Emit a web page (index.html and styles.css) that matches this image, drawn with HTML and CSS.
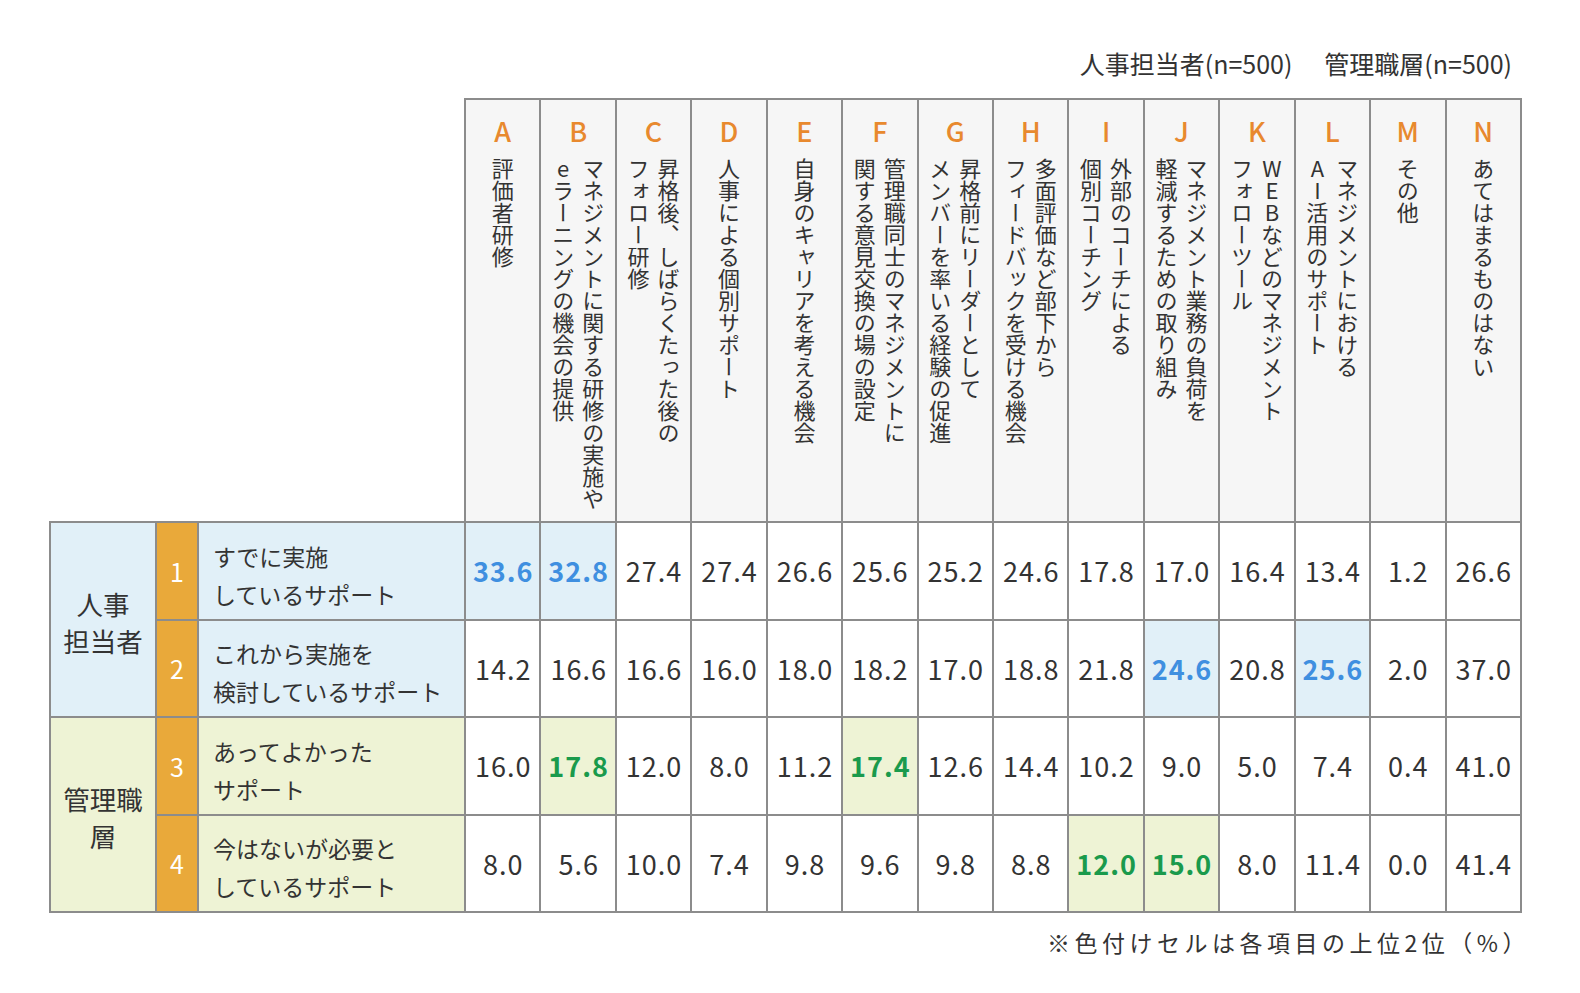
FILE: index.html
```html
<!DOCTYPE html>
<html lang="ja">
<head>
<meta charset="utf-8">
<title>サポート施策の実施状況</title>
<link rel="stylesheet" href="styles.css">
</head>
<body>
<div class="page">
  <div class="legend">
    <span>人事担当者(n=500)</span>
    <span>管理職層(n=500)</span>
  </div>
  <table class="grid">
    <colgroup>
      <col class="c-group"><col class="c-num"><col class="c-label">
      <col class="c-data"><col class="c-data"><col class="c-data"><col class="c-data"><col class="c-data"><col class="c-data"><col class="c-data">
      <col class="c-data"><col class="c-data"><col class="c-data"><col class="c-data"><col class="c-data"><col class="c-data"><col class="c-data">
    </colgroup>
    <thead>
      <tr class="head-row">
        <th class="corner" colspan="3"></th>
        <th class="hd"><div class="hd-in"><span class="letter">A</span><span class="vt">評価者研修</span></div></th>
        <th class="hd"><div class="hd-in"><span class="letter">B</span><span class="vt">マネジメントに関する研修の実施や<br>eラーニングの機会の提供</span></div></th>
        <th class="hd"><div class="hd-in"><span class="letter">C</span><span class="vt">昇格後、しばらくたった後の<br>フォロー研修</span></div></th>
        <th class="hd"><div class="hd-in"><span class="letter">D</span><span class="vt">人事による個別サポート</span></div></th>
        <th class="hd"><div class="hd-in"><span class="letter">E</span><span class="vt">自身のキャリアを考える機会</span></div></th>
        <th class="hd"><div class="hd-in"><span class="letter">F</span><span class="vt">管理職同士のマネジメントに<br>関する意見交換の場の設定</span></div></th>
        <th class="hd"><div class="hd-in"><span class="letter">G</span><span class="vt">昇格前にリーダーとして<br>メンバーを率いる経験の促進</span></div></th>
        <th class="hd"><div class="hd-in"><span class="letter">H</span><span class="vt">多面評価など部下から<br>フィードバックを受ける機会</span></div></th>
        <th class="hd"><div class="hd-in"><span class="letter">I</span><span class="vt">外部のコーチによる<br>個別コーチング</span></div></th>
        <th class="hd"><div class="hd-in"><span class="letter">J</span><span class="vt">マネジメント業務の負荷を<br>軽減するための取り組み</span></div></th>
        <th class="hd"><div class="hd-in"><span class="letter">K</span><span class="vt">WEBなどのマネジメント<br>フォローツール</span></div></th>
        <th class="hd"><div class="hd-in"><span class="letter">L</span><span class="vt">マネジメントにおける<br>AI活用のサポート</span></div></th>
        <th class="hd"><div class="hd-in"><span class="letter">M</span><span class="vt">その他</span></div></th>
        <th class="hd"><div class="hd-in"><span class="letter">N</span><span class="vt">あてはまるものはない</span></div></th>
      </tr>
    </thead>
    <tbody>
      <tr class="row">
        <th class="group blue" rowspan="2">人事<br>担当者</th>
        <td class="num">1</td>
        <td class="label blue">すでに実施<br>しているサポート</td>
        <td class="val top-blue">33.6</td><td class="val top-blue">32.8</td><td class="val">27.4</td><td class="val">27.4</td><td class="val">26.6</td><td class="val">25.6</td><td class="val">25.2</td>
        <td class="val">24.6</td><td class="val">17.8</td><td class="val">17.0</td><td class="val">16.4</td><td class="val">13.4</td><td class="val">1.2</td><td class="val">26.6</td>
      </tr>
      <tr class="row">
        <td class="num">2</td>
        <td class="label blue">これから実施を<br>検討しているサポート</td>
        <td class="val">14.2</td><td class="val">16.6</td><td class="val">16.6</td><td class="val">16.0</td><td class="val">18.0</td><td class="val">18.2</td><td class="val">17.0</td>
        <td class="val">18.8</td><td class="val">21.8</td><td class="val top-blue">24.6</td><td class="val">20.8</td><td class="val top-blue">25.6</td><td class="val">2.0</td><td class="val">37.0</td>
      </tr>
      <tr class="row">
        <th class="group green" rowspan="2">管理職<br>層</th>
        <td class="num">3</td>
        <td class="label green">あってよかった<br>サポート</td>
        <td class="val">16.0</td><td class="val top-green">17.8</td><td class="val">12.0</td><td class="val">8.0</td><td class="val">11.2</td><td class="val top-green">17.4</td><td class="val">12.6</td>
        <td class="val">14.4</td><td class="val">10.2</td><td class="val">9.0</td><td class="val">5.0</td><td class="val">7.4</td><td class="val">0.4</td><td class="val">41.0</td>
      </tr>
      <tr class="row">
        <td class="num">4</td>
        <td class="label green">今はないが必要と<br>しているサポート</td>
        <td class="val">8.0</td><td class="val">5.6</td><td class="val">10.0</td><td class="val">7.4</td><td class="val">9.8</td><td class="val">9.6</td><td class="val">9.8</td>
        <td class="val">8.8</td><td class="val top-green">12.0</td><td class="val top-green">15.0</td><td class="val">8.0</td><td class="val">11.4</td><td class="val">0.0</td><td class="val">41.4</td>
      </tr>
    </tbody>
  </table>
  <p class="note">※色付けセルは各項目の上位2位（%）</p>
</div>
</body>
</html>
```

FILE: styles.css
```css
html, body {
  margin: 0;
  padding: 0;
  background: #ffffff;
}

body {
  font-family: "Noto Sans CJK JP", "Noto Sans", sans-serif;
  color: #333333;
}

.page {
  width: 1471px;
  margin-left: 49px;
  padding-top: 47px;
}

.legend {
  display: flex;
  justify-content: flex-end;
  gap: 32px;
  padding-right: 8px;
  font-size: 25px;
  line-height: 32px;
  margin-bottom: 19px;
}

.grid {
  width: 1471px;
  table-layout: fixed;
  border-collapse: collapse;
}

.c-group { width: 106px; }
.c-num { width: 42px; }
.c-label { width: 267px; }
.c-data { width: 75.43px; }

.grid th,
.grid td {
  border: 2px solid #8c8c8c;
  padding: 0;
}

.grid .corner {
  border-top: none;
  border-left: none;
  background: #ffffff;
}

.head-row {
  height: 423px;
}

.hd {
  background: #f6f6f6;
  vertical-align: top;
  font-weight: 400;
}

.hd-in {
  display: flex;
  flex-direction: column;
  align-items: center;
  padding-top: 15px;
}

.letter {
  color: #e8892e;
  font-size: 27px;
  line-height: 32px;
  font-weight: 500;
}

.vt {
  writing-mode: vertical-rl;
  text-orientation: upright;
  font-size: 22px;
  line-height: 30px;
  margin-top: 11px;
  text-align: start;
  white-space: nowrap;
}

.row {
  height: 97.5px;
}

.group {
  font-size: 26.5px;
  line-height: 37px;
  font-weight: 400;
  text-align: center;
  vertical-align: middle;
  padding-top: 4px !important;
}

.blue { background: #e1f0f8; }
.green { background: #eef3d5; }

.num {
  background: #e9a93a;
  color: #ffffff;
  font-size: 25px;
  text-align: center;
}

.label {
  font-size: 23px;
  line-height: 38px;
  padding: 8px 0 0 14px !important;
  text-align: left;
}

.val {
  font-size: 27px;
  letter-spacing: 1px;
  text-indent: 1px;
  text-align: center;
  vertical-align: middle;
}

.top-blue {
  background: #e1f0f8;
  color: #3f8fe0;
  font-weight: 700;
}

.top-green {
  background: #eef3d5;
  color: #1a9a4c;
  font-weight: 700;
}

.note {
  margin: 13px -10px 0 0;
  text-align: right;
  font-size: 23px;
  line-height: 32px;
  letter-spacing: 4.5px;
}
```
